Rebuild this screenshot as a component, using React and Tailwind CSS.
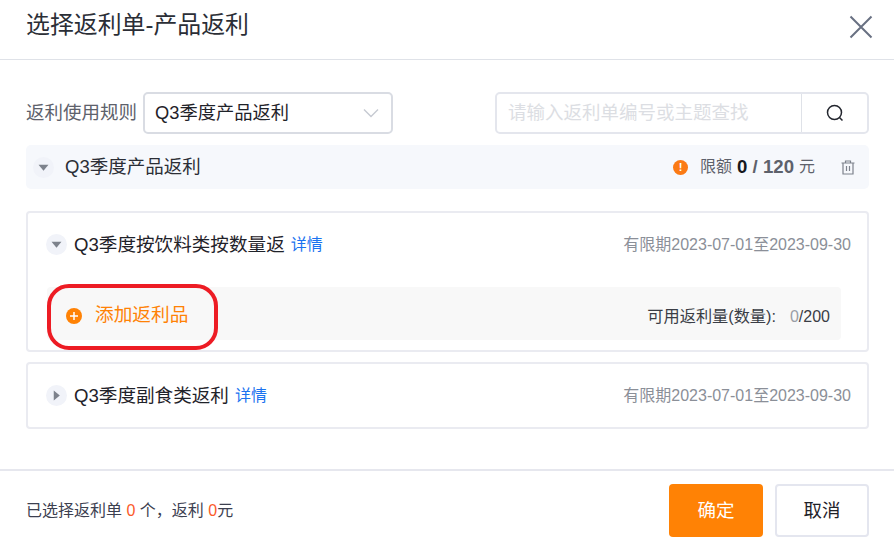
import React from 'react'

const FONT = 'font-["Liberation_Sans","Noto_Sans_CJK_SC",sans-serif]'

const Toggle = ({ open = false, className = '' }) => (
  <span className={`flex h-[21px] w-[21px] shrink-0 items-center justify-center rounded-full bg-[#f1f3f9] ${className}`}>
    <svg width="11" height="11" viewBox="0 0 10 10" fill="#7d828c">
      {open ? <path d="M0.5 2.5h9L5 8z" /> : <path d="M2.5 0.5v9L8 5z" />}
    </svg>
  </span>
)

const RuleCard = ({ title, open = false, children }) => (
  <div className="rounded-[4px] border-2 border-[#eaebf1] bg-white">
    <div className="flex h-[63px] items-center pl-[18px] pr-[16px]">
      <Toggle open={open} />
      <span className="ml-[7px] text-[18.6px] text-[#1f2229]">{title}</span>
      <a className="ml-[6px] text-[16px] text-[#1a73f0]">详情</a>
      <span className="ml-auto text-[16px] text-[#8b8f98]">有限期2023-07-01至2023-09-30</span>
    </div>
    {children}
  </div>
)

const App = () => {
  return (
    <div className={`flex h-[545px] w-[894px] flex-col overflow-hidden bg-white ${FONT}`}>
      {/* Header */}
      <div className="flex h-[60px] shrink-0 items-center justify-between border-b border-[#dfe2e8] pb-[10px] pl-[26px] pr-[21px]">
        <h1 className="text-[23.9px] font-normal text-[#2b2e36]">选择返利单-产品返利</h1>
        <svg width="24" height="24" viewBox="0 0 24 24" fill="none" stroke="#687082" strokeWidth="2" className="mt-[4px]">
          <path d="M1.5 1.5l21 21M22.5 1.5l-21 21" />
        </svg>
      </div>

      {/* Body */}
      <div className="flex-1 pl-[26px] pr-[25px] pt-[32px]">
        <div className="flex h-[42px] items-center">
          <span className="w-[117px] text-[18.5px] text-[#5d616b]">返利使用规则</span>
          <div className="flex h-[42px] w-[250px] items-center justify-between rounded-[5px] border-2 border-[#d9dce3] pl-[10px] pr-[12px]">
            <span className="text-[18.3px] text-[#1f2229]">Q3季度产品返利</span>
            <svg width="16" height="10" viewBox="0 0 16 10" fill="none" stroke="#c6cad2" strokeWidth="1.4">
              <path d="M1 1.5l7 7 7-7" />
            </svg>
          </div>
          <div className="ml-auto flex h-[42px] w-[374px] rounded-[5px] border-2 border-[#e4e6ed]">
            <div className="flex flex-1 items-center border-r border-[#dfe2e8] pl-[11px] text-[18.5px] text-[#dcdee3]">
              请输入返利单编号或主题查找
            </div>
            <div className="flex w-[65px] items-center justify-center">
              <svg width="18" height="18" viewBox="0 0 18 18" fill="none" stroke="#23262e" strokeWidth="1.5">
                <circle cx="8.5" cy="8.5" r="7" />
                <path d="M13.5 13.5l3 3" />
              </svg>
            </div>
          </div>
        </div>

        <div className="mt-[11px] flex h-[44px] items-center rounded-[5px] bg-[#f6f8fc] pl-[7px] pr-[14px]">
          <Toggle open className="bg-[#f0f2f8]" />
          <span className="ml-[11px] text-[18.5px] text-[#2b2e36]">Q3季度产品返利</span>
          <span className="ml-auto flex h-[15px] w-[15px] items-center justify-center rounded-full bg-[#fb7a14] text-[11px] font-bold leading-none text-white">!</span>
          <span className="ml-[12px] text-[16px] text-[#5d616b]">限额</span>
          <span className="ml-[5px] text-[18.6px] font-bold text-[#5d616b]"><span className="text-[#16181d]">0</span> / 120</span>
          <span className="ml-[5px] text-[16px] text-[#5d616b]">元</span>
          <svg width="14" height="15" viewBox="0 0 14 15" fill="none" stroke="#7d828c" strokeWidth="1.2" className="ml-[26px]">
            <path d="M0.5 3h13M4.5 3V1h5v2M2 3v11h10V3M5.5 6v5M8.5 6v5" />
          </svg>
        </div>

        <div className="mt-[22px] flex flex-col gap-[10px]">
          <RuleCard title="Q3季度按饮料类按数量返" open>
            <div className="relative mb-[10px] ml-[19px] mr-[26px] mt-[11px] flex h-[53px] items-center rounded-[4px] bg-[#f8f8f8] pl-[19px] pr-[11px] pt-[4px]">
              <span className="flex h-[16px] w-[16px] items-center justify-center rounded-full bg-[#ff8205]">
                <svg width="8" height="8" viewBox="0 0 8 8" stroke="#fff" strokeWidth="1.5"><path d="M0 4h8M4 0v8" /></svg>
              </span>
              <span className="ml-[13px] text-[18.7px] text-[#ff8205]">添加返利品</span>
              <span className="ml-auto mt-[2px] text-[16.2px] text-[#3a3d45]">可用返利量(数量):</span>
              <span className="ml-[14px] mt-[2px] text-[16px] text-[#3a3d45]"><span className="text-[#9a9ea6]">0</span>/200</span>
              {/* Red annotation drawn over the row */}
              <div className="pointer-events-none absolute left-0 top-[-3px] h-[66px] w-[171px] rounded-[22px] border-[4px] border-[#ed1c24]" />
            </div>
          </RuleCard>
          <RuleCard title="Q3季度副食类返利" />
        </div>
      </div>

      {/* Footer */}
      <div className="flex h-[76px] shrink-0 items-start justify-between border-t-2 border-[#e6e7ee] pl-[26px] pr-[25px] pt-[13px]">
        <div className="mt-[15px] text-[16px] text-[#3c4050]">
          已选择返利单 <span className="text-[#fb5a2a]">0</span> 个，返利 <span className="text-[#fb5a2a]">0</span>元
        </div>
        <div className="flex gap-[12px]">
          <button className="h-[53px] w-[94px] rounded-[4px] bg-[#ff8205] text-[18.5px] text-white">确定</button>
          <button className="h-[53px] w-[94px] rounded-[4px] border-2 border-[#e4e6ef] bg-white text-[18.5px] text-[#1f2229]">取消</button>
        </div>
      </div>
    </div>
  )
}

export default App
